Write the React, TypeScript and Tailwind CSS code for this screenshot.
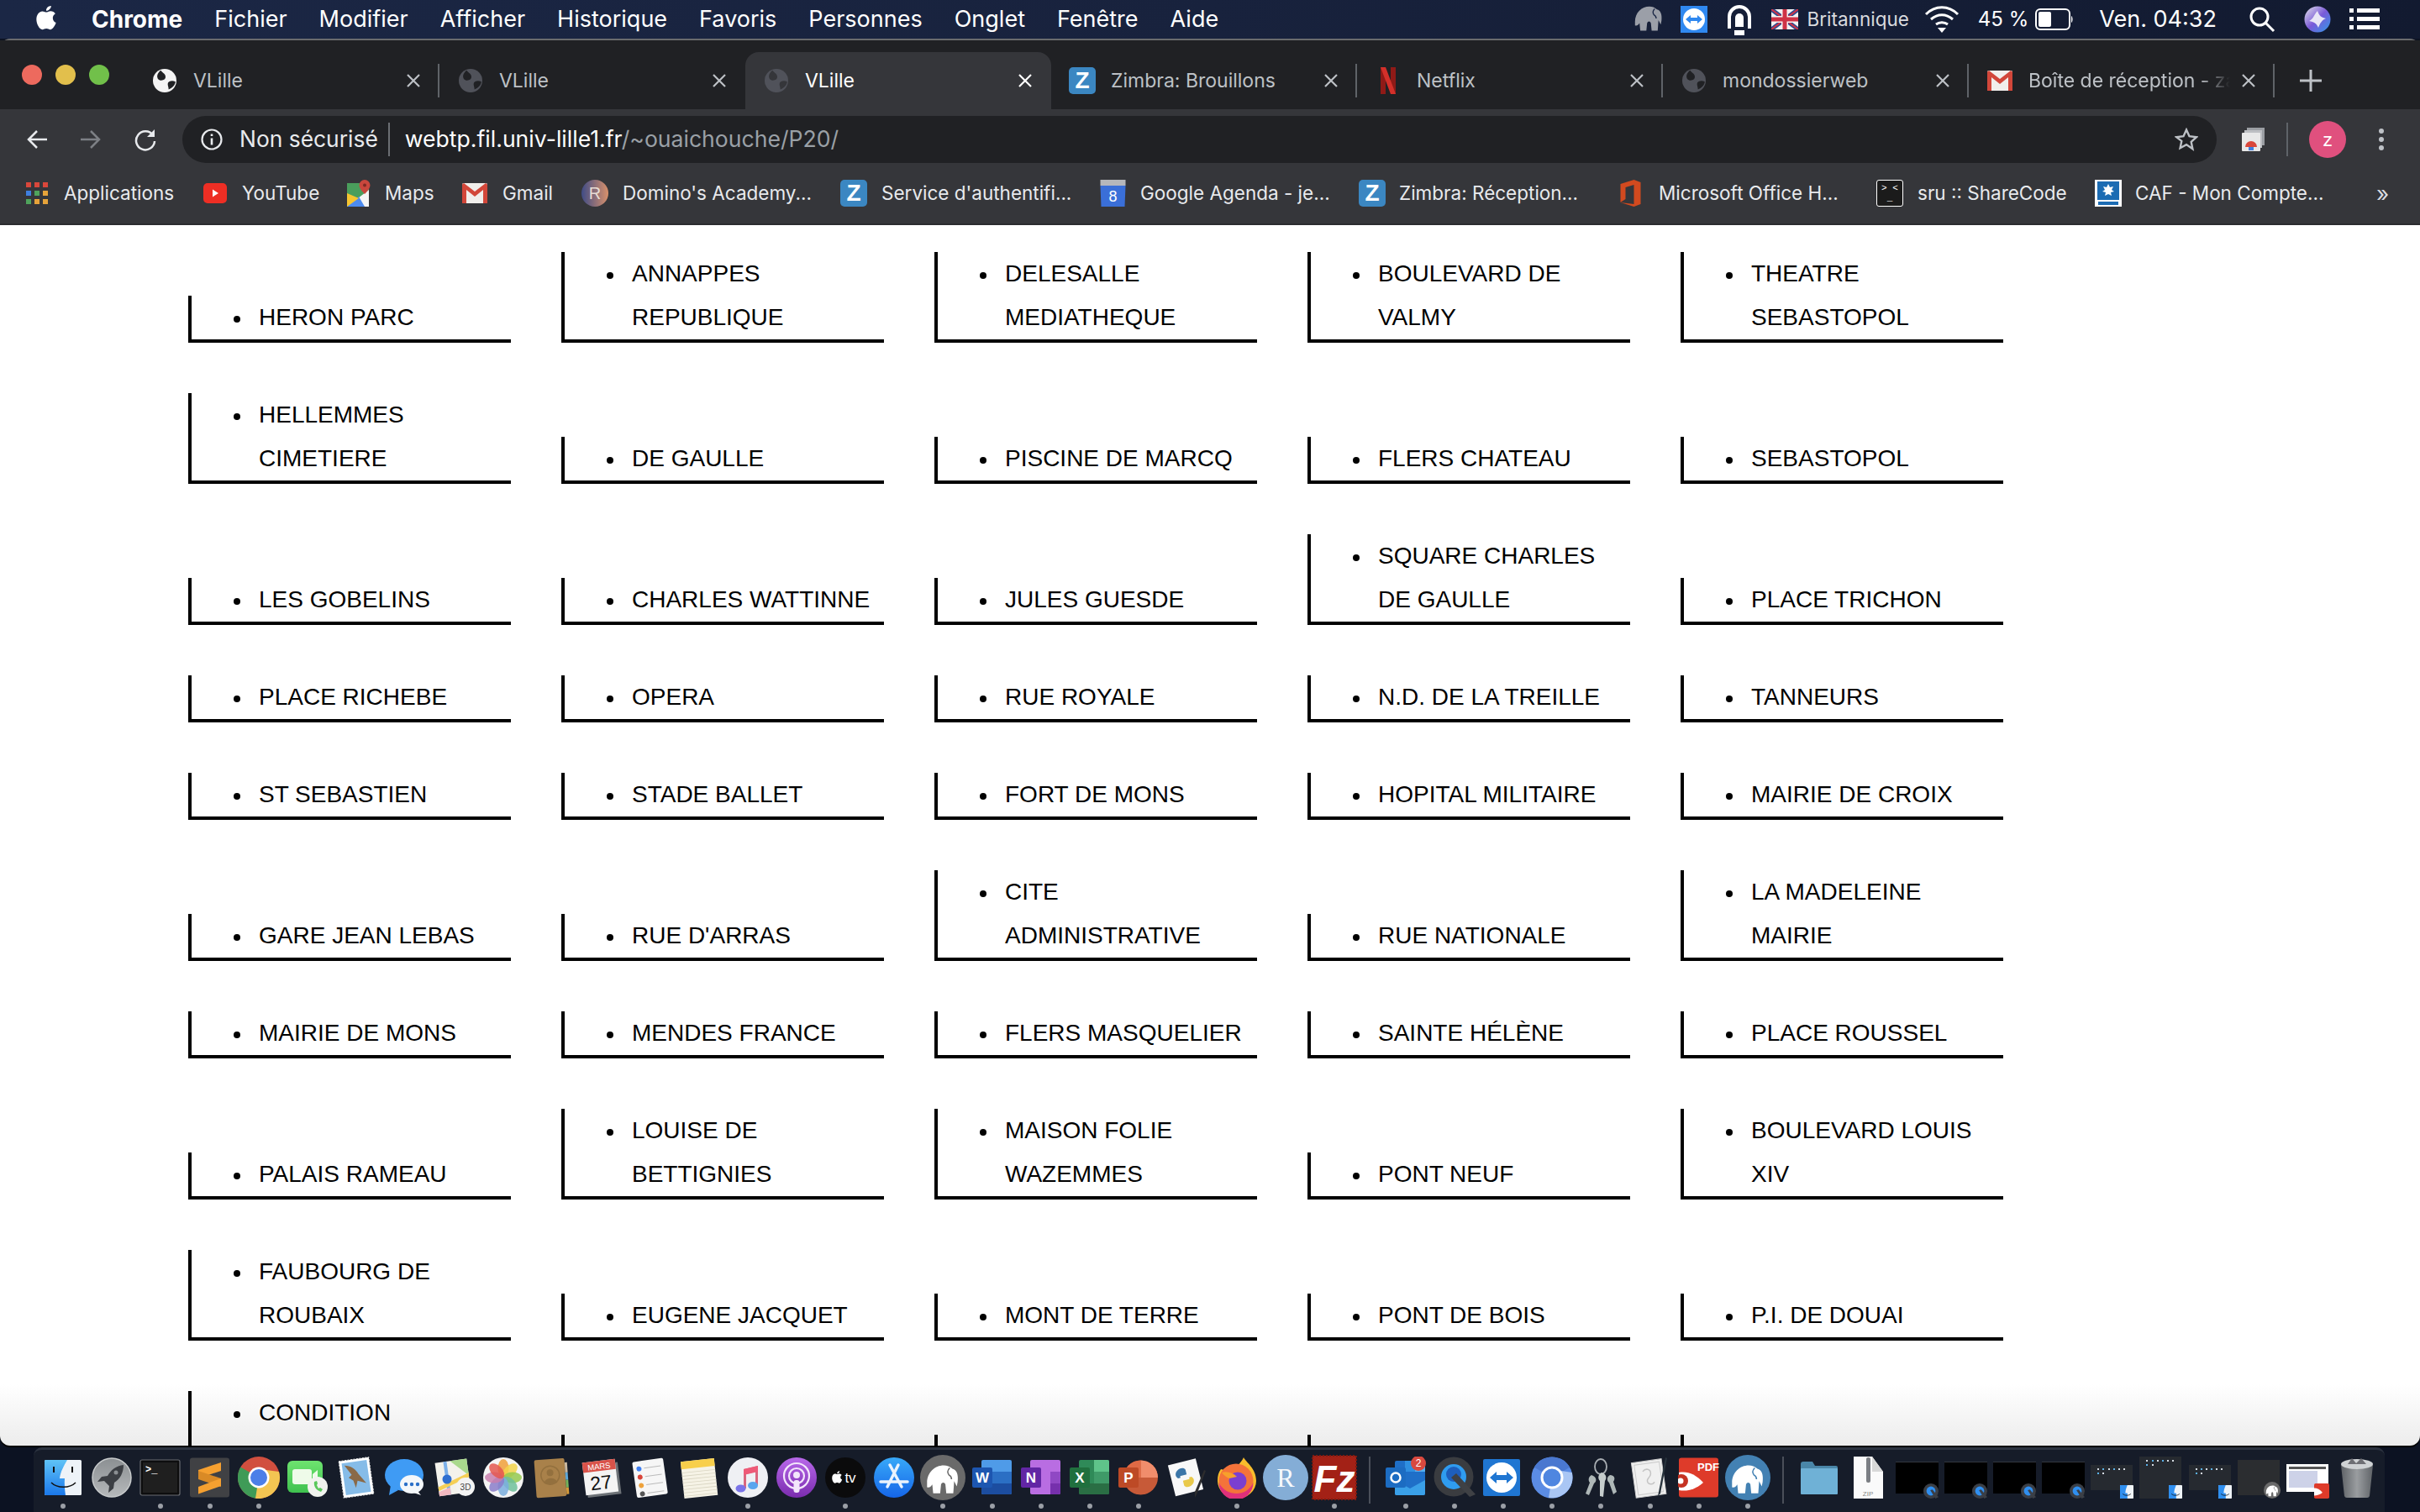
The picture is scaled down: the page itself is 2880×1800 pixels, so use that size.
import type { ReactNode } from "react";

const UI = "font-['Inter','Liberation_Sans',sans-serif]";

const stations: string[] = [
  "HERON PARC", "ANNAPPES REPUBLIQUE", "DELESALLE MEDIATHEQUE", "BOULEVARD DE VALMY", "THEATRE SEBASTOPOL",
  "HELLEMMES CIMETIERE", "DE GAULLE", "PISCINE DE MARCQ", "FLERS CHATEAU", "SEBASTOPOL",
  "LES GOBELINS", "CHARLES WATTINNE", "JULES GUESDE", "SQUARE CHARLES DE GAULLE", "PLACE TRICHON",
  "PLACE RICHEBE", "OPERA", "RUE ROYALE", "N.D. DE LA TREILLE", "TANNEURS",
  "ST SEBASTIEN", "STADE BALLET", "FORT DE MONS", "HOPITAL MILITAIRE", "MAIRIE DE CROIX",
  "GARE JEAN LEBAS", "RUE D'ARRAS", "CITE ADMINISTRATIVE", "RUE NATIONALE", "LA MADELEINE MAIRIE",
  "MAIRIE DE MONS", "MENDES FRANCE", "FLERS MASQUELIER", "SAINTE HÉLÈNE", "PLACE ROUSSEL",
  "PALAIS RAMEAU", "LOUISE DE BETTIGNIES", "MAISON FOLIE WAZEMMES", "PONT NEUF", "BOULEVARD LOUIS XIV",
  "FAUBOURG DE ROUBAIX", "EUGENE JACQUET", "MONT DE TERRE", "PONT DE BOIS", "P.I. DE DOUAI",
  "CONDITION",
];

function Globe({ fill, bg }: { fill: string; bg: string }) {
  return (
    <svg viewBox="0 0 24 24" className="h-[28px] w-[28px] shrink-0">
      <circle cx="12" cy="12" r="12" fill={fill} />
      <path d="M8 1.500C5 4 3.500 7 5 10c2 2.500 5 2 7 .5 1.500-1.500 1-4-.5-5.500C10.500 4 9 3 8 1.500z" fill={bg} />
      <path d="M23 13c-3-1.500-6-1-7.500 1-1 2.500.5 4 .5 7 3.500-1.500 6.500-4 7-8z" fill={bg} />
    </svg>
  );
}

function ZimbraIcon() {
  return (
    <div className="flex h-[32px] w-[32px] shrink-0 items-center justify-center rounded-[5px] bg-[#3b87c2] font-['Liberation_Sans',sans-serif] text-[28px] font-bold text-white">
      Z
    </div>
  );
}

function GmailIcon() {
  return (
    <svg viewBox="0 0 30 24" className="h-[26px] w-[30px] shrink-0">
      <rect width="30" height="24" rx="1.500" fill="#f1efec" />
      <path d="M0 1.500V24h5V8l10 8 10-8v16h5V1.500L28 0 15 10 2 0z" fill="#d2473a" />
    </svg>
  );
}

function NetflixIcon() {
  return (
    <svg viewBox="0 0 18 32" className="h-[32px] w-[18px] shrink-0">
      <rect x="0" width="6" height="32" fill="#8f1a17" />
      <rect x="12" width="6" height="32" fill="#8f1a17" />
      <path d="M0 0h6l12 32h-6z" fill="#d3302a" />
    </svg>
  );
}

const tabs: { title: string; icon: ReactNode; active?: boolean; fade?: boolean; sep?: boolean }[] = [
  { title: "VLille", icon: <Globe fill="#f4f4f4" bg="#202124" />, sep: true },
  { title: "VLille", icon: <Globe fill="#50525a" bg="#202124" />, sep: false },
  { title: "VLille", icon: <Globe fill="#50525a" bg="#35363a" />, active: true, sep: false },
  { title: "Zimbra: Brouillons", icon: <ZimbraIcon />, sep: true },
  { title: "Netflix", icon: <NetflixIcon />, sep: true },
  { title: "mondossierweb", icon: <Globe fill="#50525a" bg="#202124" />, sep: true },
  { title: "Boîte de réception - za", icon: <GmailIcon />, fade: true, sep: true },
];

const bookmarks: { label: string; width: string; ml: string; mr: string; icon: ReactNode }[] = [
  {
    label: "Applications",
    width: "w-[131px]",
    ml: "ml-[19px]",
    mr: "mr-[35px]",
    icon: (
      <svg viewBox="0 0 26 26" className="ml-[2px] h-[26px] w-[26px] shrink-0">
        {["#d9473b", "#d9473b", "#d9473b", "#3f7fe0", "#4fa35c", "#e6a33a", "#4fa35c", "#e6a33a", "#e6a33a"].map((c, i) => (
          <rect key={i} x={(i % 3) * 10} y={Math.floor(i / 3) * 10} width="6" height="6" fill={c} />
        ))}
      </svg>
    ),
  },
  {
    label: "YouTube",
    width: "w-[90px]",
    ml: "ml-[18px]",
    mr: "mr-[35px]",
    icon: (
      <svg viewBox="0 0 28 24" className="h-[24px] w-[28px] shrink-0">
        <rect width="28" height="24" rx="5" fill="#ee2e24" />
        <path d="M11 7.500l7 4.500-7 4.500z" fill="#fff" />
      </svg>
    ),
  },
  {
    label: "Maps",
    width: "w-[58px]",
    ml: "ml-[17px]",
    mr: "mr-[34px]",
    icon: (
      <svg viewBox="0 0 28 32" className="h-[32px] w-[28px] shrink-0">
        <path d="M0 4h26v28H0z" fill="#4a9e5c" />
        <path d="M0 32L26 12v20z" fill="#f5f5f5" />
        <path d="M0 32l14-12 7 12z" fill="#4c8bf0" />
        <path d="M0 16l14 6-14 10z" fill="#f6c530" />
        <path d="M21 0a6.500 6.500 0 0 1 6.500 6.500C27.500 11 21 17 21 17s-6.500-6-6.500-10.500A6.500 6.500 0 0 1 21 0z" fill="#c9473d" />
        <circle cx="21" cy="6.500" r="2" fill="#7c2a24" />
      </svg>
    ),
  },
  { label: "Gmail", width: "w-[62px]", ml: "ml-[18px]", mr: "mr-[32px]", icon: <GmailIcon /> },
  {
    label: "Domino's Academy...",
    width: "w-[225px]",
    ml: "ml-[17px]",
    mr: "mr-[34px]",
    icon: (
      <svg viewBox="0 0 32 32" className="h-[32px] w-[32px] shrink-0">
        <defs>
          <linearGradient id="dom" x1="0" x2="1">
            <stop offset="0" stopColor="#3f4c86" />
            <stop offset="1" stopColor="#d9916b" />
          </linearGradient>
        </defs>
        <circle cx="16" cy="16" r="16" fill="url(#dom)" />
        <text x="16" y="23" textAnchor="middle" fontSize="20" fill="#e8dcd4" fontFamily="Liberation Sans">R</text>
      </svg>
    ),
  },
  { label: "Service d'authentifi...", width: "w-[224px]", ml: "ml-[17px]", mr: "mr-[36px]", icon: <ZimbraIcon /> },
  {
    label: "Google Agenda - je...",
    width: "w-[225px]",
    ml: "ml-[17px]",
    mr: "mr-[35px]",
    icon: (
      <svg viewBox="0 0 30 32" className="h-[32px] w-[31px] shrink-0">
        <rect y="0" width="30" height="7" fill="#b5b7bb" />
        <path d="M0 7h30l-1 25H1z" fill="#3a6fd8" />
        <text x="15" y="26" textAnchor="middle" fontSize="18" fill="#fff" fontFamily="Liberation Sans">8</text>
      </svg>
    ),
  },
  { label: "Zimbra: Réception...", width: "w-[215px]", ml: "ml-[16px]", mr: "mr-[48px]", icon: <ZimbraIcon /> },
  {
    label: "Microsoft Office H...",
    width: "w-[214px]",
    ml: "ml-[21px]",
    mr: "mr-[45px]",
    icon: (
      <svg viewBox="0 0 24 32" className="h-[32px] w-[25px] shrink-0">
        <path d="M0 5L16 0l8 3v26l-8 3-16-5 16 2V6L6 9v14l-6 4z" fill="#d24a1f" />
      </svg>
    ),
  },
  {
    label: "sru :: ShareCode",
    width: "w-[178px]",
    ml: "ml-[17px]",
    mr: "mr-[33px]",
    icon: (
      <div className="flex h-[32px] w-[32px] shrink-0 flex-col items-center justify-center rounded-[3px] border border-white bg-[#1b1b1b] font-['Liberation_Mono',monospace] text-[11px] leading-[12px] text-white">
        <span>&gt;&nbsp;&lt;</span>
        <span>_</span>
      </div>
    ),
  },
  {
    label: "CAF - Mon Compte...",
    width: "w-[225px]",
    ml: "ml-[16px]",
    mr: "mr-[62px]",
    icon: (
      <svg viewBox="0 0 32 32" className="h-[32px] w-[32px] shrink-0">
        <rect width="32" height="32" fill="#fff" />
        <rect x="3" y="2" width="26" height="22" fill="#1c6cb3" />
        <path d="M16 5l2 4 4-1-2 4 3 2-4 1 1 4-4-2-4 2 1-4-4-1 3-2-2-4 4 1z" fill="#fff" />
        <rect x="4" y="26" width="24" height="4" fill="#1c6cb3" />
      </svg>
    ),
  },
];

function Elephant({ fill = "#fff", line }: { fill?: string; line: string }) {
  return (
    <>
      <path
        d="M7 31C7 19 16 11 26 11c4 0 7 1 10 4 5 1 7 7 6 15l-1 5-3-6-1 14h-8l-1-10c-1-3-4-3-5 0l-1 10h-8l-1-10c-2 3-4 4-6 3z"
        fill={fill}
      />
      <path d="M33 14c-3 3-3 5-1 8 2 1 3 3 3 5" stroke={line} strokeWidth="1.500" fill="none" />
    </>
  );
}

function ChromeLogo() {
  return (
    <>
      <circle cx="25" cy="25" r="25" fill="#d14f3f" />
      <path d="M25 25L3.300 12.500A25 25 0 0 0 21 49.700L33 32z" fill="#3f9b57" />
      <path d="M25 25L21 49.700A25 25 0 0 0 49 18L34 16z" fill="#f3c552" />
      <circle cx="25" cy="25" r="12.500" fill="#fff" />
      <circle cx="25" cy="25" r="10" fill="#4c7fe8" />
    </>
  );
}

function OfficeIcon({ front, letter, children }: { front: string; letter: string; children: ReactNode }) {
  return (
    <svg viewBox="0 0 50 50" className="h-[50px] w-[50px]">
      {children}
      <rect x="1" y="13" width="24" height="24" rx="2" fill={front} />
      <text x="13" y="31" textAnchor="middle" fontSize="17" fontWeight="700" fontFamily="Liberation Sans" fill="#fff">{letter}</text>
    </svg>
  );
}

function Thumb({ tall, badge, kind }: { tall?: boolean; badge: ReactNode; kind: "black" | "finder" | "site" | "mamp" }) {
  return (
    <div className="relative flex h-[50px] w-[51px] items-center">
      {kind === "black" && <div className="h-[38px] w-[51px] border-t border-[#33373f] bg-black" />}
      {kind === "finder" && (
        <div className={`w-[50px] bg-[#262a30] ${tall ? "h-[50px]" : "h-[30px]"} grid grid-cols-[repeat(6,1fr)] content-start gap-[3px] px-[8px] pt-[4px]`}>
          <div className="h-[2px] w-[2px] bg-[#d5dbe2]" />
          <div className="h-[2px] w-[2px] bg-[#5bb2e8]" />
          <div className="h-[2px] w-[2px] bg-[#d5dbe2]" />
          <div className="h-[2px] w-[2px] bg-[#5bb2e8]" />
          <div className="h-[2px] w-[2px] bg-[#d5dbe2]" />
          <div className="h-[2px] w-[2px] bg-[#d5dbe2]" />
          <div className="h-[2px] w-[2px] bg-[#5bb2e8]" />
          <div className="h-[2px] w-[2px] bg-[#d5dbe2]" />
        </div>
      )}
      {kind === "mamp" && <div className="h-[42px] w-[50px] bg-[#2b2d30]" />}
      {kind === "site" && (
        <div className="h-[33px] w-[50px] bg-white p-[3px]">
          <div className="h-[3px] bg-[#555]" />
          <div className="mt-[2px] h-[20px] w-[34px] bg-[#cdd2e8]" />
        </div>
      )}
      <div className="absolute right-0 bottom-0 flex">{badge}</div>
    </div>
  );
}

const FinderMini = () => (
  <svg viewBox="0 0 20 20" className="h-[16px] w-[16px]">
    <rect width="20" height="20" rx="1" fill="#eef3f8" />
    <path d="M0 1a1 1 0 0 1 1-1h10c-2 5-3 8-3 12h3v8H1a1 1 0 0 1-1-1z" fill="#2f8ff0" />
    <path d="M4 13c3 3 9 3 12 0" stroke="#111" fill="none" />
  </svg>
);

const QuickMini = () => (
  <svg viewBox="0 0 20 20" className="h-[18px] w-[18px]">
    <circle cx="10" cy="10" r="10" fill="#3b3f46" />
    <circle cx="10" cy="10" r="6" fill="#2f8ff0" />
    <path d="M9 9l3-1 8 10-4 2z" fill="#3b3f46" />
  </svg>
);

type DockEntry = { node: ReactNode; dot?: boolean } | "sep";

const Svg50 = ({ children }: { children: ReactNode }) => (
  <svg viewBox="0 0 50 50" className="h-[50px] w-[50px]">
    {children}
  </svg>
);

const Tall = ({ children }: { children: ReactNode }) => (
  <svg viewBox="0 0 54 54" className="h-[54px] w-[54px]">
    {children}
  </svg>
);

const dock: DockEntry[] = [
  {
    dot: true,
    node: (
      <Svg50>
        <defs>
          <linearGradient id="fb" x1="0" y1="0" x2="0" y2="1">
            <stop offset="0" stopColor="#5fc3f7" />
            <stop offset="1" stopColor="#1b78ea" />
          </linearGradient>
        </defs>
        <rect x="3" y="4" width="44" height="42" rx="1.500" fill="#eef3f8" />
        <path d="M3 5.500A1.500 1.500 0 0 1 4.500 4H30c-4 7-8 14-9 22h6c-.5 6 0 13 1 20H4.500A1.500 1.500 0 0 1 3 44.500z" fill="url(#fb)" />
        <rect x="13" y="12" width="2" height="7" fill="#111" />
        <rect x="35" y="12" width="2" height="7" fill="#111" />
        <path d="M11 31c7 7 22 7 29 0" stroke="#111" strokeWidth="1.500" fill="none" />
      </Svg50>
    ),
  },
  {
    node: (
      <Svg50>
        <defs>
          <linearGradient id="lp" x1="0" y1="0" x2="0" y2="1">
            <stop offset="0" stopColor="#8b8f92" />
            <stop offset="1" stopColor="#b6b9bb" />
          </linearGradient>
        </defs>
        <circle cx="25" cy="25" r="23" fill="url(#lp)" stroke="#c8cbcc" strokeWidth="1.500" />
        <path d="M39 10c-9 1-15 6-19 13l-7 1-5 6 8-1 6 6-1 8 6-5 1-7c7-4 11-12 11-21z" fill="#3c3f44" />
        <circle cx="30" cy="19" r="2.500" fill="#8b8f92" />
      </Svg50>
    ),
  },
  {
    dot: true,
    node: (
      <Svg50>
        <rect x="1" y="4" width="47" height="42" rx="2" fill="#0d0d0e" stroke="#6a6d72" strokeWidth="1.200" />
        <rect x="4" y="7" width="41" height="36" fill="#1f1f1f" />
        <text x="7" y="19" fontSize="12" fontWeight="700" fill="#fff" fontFamily="Liberation Mono">&gt;_</text>
      </Svg50>
    ),
  },
  {
    dot: true,
    node: (
      <Svg50>
        <rect x="1" y="1.500" width="47" height="47" rx="3" fill="#404144" />
        <polygon points="11,16 38,7 38,17 11,26" fill="#f5a030" />
        <polygon points="11,17 38,26 38,36 11,27" fill="#d98a26" />
        <polygon points="11,36 38,26 38,35 11,44.500" fill="#f5a030" />
      </Svg50>
    ),
  },
  { dot: true, node: <Svg50><ChromeLogo /></Svg50> },
  {
    node: (
      <Svg50>
        <defs>
          <linearGradient id="ft" x1="0" y1="0" x2="0" y2="1">
            <stop offset="0" stopColor="#6ee36f" />
            <stop offset="1" stopColor="#3fc14f" />
          </linearGradient>
        </defs>
        <rect x="1" y="5" width="42" height="38" rx="6" fill="url(#ft)" />
        <rect x="7" y="15" width="23" height="18" rx="3" fill="#eefbe9" />
        <path d="M31 21l6-5v14l-6-3z" fill="#eefbe9" />
        <circle cx="37" cy="36" r="12" fill="#f1f3ef" />
        <path d="M33 30c-1 5 2 10 8 12l2-3-3-2-2 1-2-4 1-2-1-3z" fill="#5ac85c" />
      </Svg50>
    ),
  },
  {
    node: (
      <Svg50>
        <g transform="rotate(-8 25 25)">
          <rect x="7" y="3" width="36" height="44" fill="#fff" stroke="#e6e6e6" strokeDasharray="2 1.500" />
          <rect x="10" y="6" width="30" height="38" fill="#86bce8" />
          <path d="M13 9c7 1 13 6 15 12l8 12-10-4-3 8-2-9-5-4 4-3z" fill="#8a6a48" />
        </g>
      </Svg50>
    ),
  },
  {
    node: (
      <Svg50>
        <ellipse cx="24" cy="22" rx="23" ry="19" fill="#3f9bf4" />
        <path d="M8 34l-2 12 11-6z" fill="#3f9bf4" />
        <ellipse cx="33" cy="33" rx="14" ry="11" fill="#f4f7fa" />
        <path d="M40 41l4 5-9-3z" fill="#f4f7fa" />
        <circle cx="26" cy="33" r="2.200" fill="#2a6fc8" />
        <circle cx="33" cy="33" r="2.200" fill="#2a6fc8" />
        <circle cx="40" cy="33" r="2.200" fill="#2a6fc8" />
      </Svg50>
    ),
  },
  {
    node: (
      <Svg50>
        <g transform="rotate(-8 22 24)">
          <rect x="4" y="5" width="38" height="40" fill="#f3f2ec" />
          <path d="M22 5h20v20z" fill="#a9d98d" />
          <path d="M14 5h4v40h-4z" fill="#7cb0ea" />
          <path d="M4 34L42 22v5L4 39z" fill="#f5cf56" />
          <path d="M4 40l14-4v9H4z" fill="#f3b9c0" />
        </g>
        <circle cx="16" cy="27" r="5.500" fill="#2f6fd0" />
        <circle cx="38" cy="36" r="11" fill="#f3f3f3" />
        <text x="38" y="40" textAnchor="middle" fontSize="10" fill="#444" fontFamily="Liberation Sans">3D</text>
      </Svg50>
    ),
  },
  {
    node: (
      <Svg50>
        <circle cx="25" cy="25" r="24" fill="#f4f4f4" />
        {["#f0a03a", "#f3d34a", "#94c94f", "#6fbf9a", "#7aaede", "#8a7cc9", "#c87fae", "#e4574f"].map((c, i) => (
          <ellipse key={i} cx="25" cy="14" rx="6.500" ry="11" fill={c} opacity="0.85" transform={`rotate(${i * 45} 25 25)`} />
        ))}
      </Svg50>
    ),
  },
  {
    node: (
      <Svg50>
        <g transform="rotate(-4 25 25)">
          <rect x="5" y="3" width="36" height="45" rx="2" fill="#a9814a" />
          <rect x="41" y="8" width="3" height="12" fill="#c9b8a0" />
          <rect x="41" y="20" width="3" height="9" fill="#5ea8d8" />
          <rect x="41" y="29" width="3" height="9" fill="#75b35c" />
          <rect x="41" y="38" width="3" height="8" fill="#d59a3a" />
          <circle cx="23" cy="22" r="11" fill="none" stroke="#93703e" strokeWidth="1.500" />
          <circle cx="23" cy="19" r="4" fill="#93703e" />
          <path d="M15 31c2-7 14-7 16 0-4 3-12 3-16 0z" fill="#93703e" />
        </g>
      </Svg50>
    ),
  },
  {
    node: (
      <Svg50>
        <g transform="rotate(-7 25 25)">
          <rect x="7" y="9" width="40" height="38" fill="#6d7277" />
          <rect x="5" y="5" width="39" height="39" fill="#f4f4f4" />
          <rect x="5" y="5" width="39" height="12" fill="#d9534a" />
          <text x="24.500" y="15" textAnchor="middle" fontSize="9.500" fill="#fff" fontFamily="Liberation Sans">MARS</text>
          <text x="24.500" y="39" textAnchor="middle" fontSize="23" fill="#111" fontFamily="Liberation Sans">27</text>
        </g>
      </Svg50>
    ),
  },
  {
    node: (
      <Svg50>
        <g transform="rotate(-8 25 25)">
          <rect x="7" y="4" width="37" height="43" rx="2" fill="#f6f6f6" />
          {["#3f7ff0", "#d9453a", "#eea23b", "#555"].map((c, i) => (
            <g key={i}>
              <circle cx="14" cy={13 + i * 10} r="3" fill={c} />
              <rect x="20" y={12.500 + i * 10} width="20" height="1" fill="#bbb" />
            </g>
          ))}
        </g>
      </Svg50>
    ),
  },
  {
    node: (
      <Svg50>
        <g transform="rotate(-6 25 25)">
          <rect x="5" y="4" width="40" height="44" fill="#f6f3e6" />
          <rect x="5" y="4" width="40" height="9" fill="#f8cf4b" />
          {[17, 21, 25, 29, 33, 37, 41, 45].map((y) => (
            <rect key={y} x="5" y={y} width="40" height="0.800" fill="#d9d5c2" />
          ))}
        </g>
      </Svg50>
    ),
  },
  {
    dot: true,
    node: (
      <Svg50>
        <circle cx="25" cy="25" r="24" fill="#eff0f4" />
        <path d="M20 15l17-4v23h-3V18l-11 3v17h-3z" fill="#d9667e" />
        <path d="M20 15l17-4v7l-17 4z" fill="#ee5a78" />
        <ellipse cx="16.500" cy="38" rx="6" ry="4.500" fill="#7a74e8" />
        <ellipse cx="31" cy="34.500" rx="6" ry="4.500" fill="#5aa5ee" />
      </Svg50>
    ),
  },
  {
    node: (
      <Svg50>
        <defs>
          <linearGradient id="pod" x1="0" y1="0" x2="0" y2="1">
            <stop offset="0" stopColor="#b868ea" />
            <stop offset="1" stopColor="#7a2cae" />
          </linearGradient>
        </defs>
        <circle cx="25" cy="25" r="24" fill="url(#pod)" />
        <circle cx="25" cy="23" r="15" fill="none" stroke="#f3e6fb" strokeWidth="2.200" />
        <circle cx="25" cy="23" r="9" fill="none" stroke="#f3e6fb" strokeWidth="2.200" />
        <circle cx="25" cy="22" r="4" fill="#f3e6fb" />
        <rect x="21.500" y="28" width="7" height="15" rx="3" fill="#f3e6fb" />
      </Svg50>
    ),
  },
  {
    dot: true,
    node: (
      <Svg50>
        <circle cx="25" cy="25" r="24" fill="#0b0b0c" />
        <g transform="translate(8 16) scale(0.6)" fill="#fff">
          <path d="M17 2c.2 2-2 5-5 5-.3-2.500 2-5 5-5zM12 8.500c1.200 0 2.500-1.200 4.500-1.200 2 0 3.800 1 4.800 2.700-3.800 2.200-3.200 7.700.7 9.200-1 2.800-3.400 7-5.800 7-1.500 0-2.200-1-4-1s-2.700 1-4.100 1C5 26.200 2 20.500 2 15.800 2 10.500 5.200 7.500 8 7.500c1.700 0 3 1 4 1z" />
        </g>
        <text x="31" y="31" textAnchor="middle" fontSize="17" fill="#fff" fontFamily="Liberation Sans">tv</text>
      </Svg50>
    ),
  },
  {
    node: (
      <Svg50>
        <defs>
          <linearGradient id="as" x1="0" y1="0" x2="0" y2="1">
            <stop offset="0" stopColor="#38a9f8" />
            <stop offset="1" stopColor="#1565e8" />
          </linearGradient>
        </defs>
        <circle cx="25" cy="25" r="24" fill="url(#as)" />
        <path d="M30 10L17 36M20 10l14 26M9 30h32" stroke="#eaf3fd" strokeWidth="3.500" strokeLinecap="round" />
      </Svg50>
    ),
  },
  {
    dot: true,
    node: (
      <Tall>
        <circle cx="27" cy="27" r="27" fill="#6a6a6a" />
        <g transform="translate(1 1) scale(1.040)">
          <Elephant line="#6a6a6a" />
        </g>
      </Tall>
    ),
  },
  {
    dot: true,
    node: (
      <OfficeIcon front="#1d56b0" letter="W">
        <rect x="12" y="4" width="36" height="41" rx="2" fill="#4f9be8" />
        <rect x="12" y="18" width="36" height="14" fill="#2b6fc4" />
        <path d="M12 32h36v11a2 2 0 0 1-2 2H14a2 2 0 0 1-2-2z" fill="#1c4da0" />
      </OfficeIcon>
    ),
  },
  {
    dot: true,
    node: (
      <OfficeIcon front="#6226a4" letter="N">
        <rect x="12" y="4" width="36" height="41" rx="2" fill="#b96de2" />
        <rect x="36" y="18" width="12" height="14" fill="#9048c4" />
        <path d="M36 32h12v11a2 2 0 0 1-2 2H36z" fill="#7630ac" />
      </OfficeIcon>
    ),
  },
  {
    dot: true,
    node: (
      <OfficeIcon front="#20703e" letter="X">
        <rect x="12" y="4" width="36" height="41" rx="2" fill="#2f8a58" />
        <path d="M30 4h16a2 2 0 0 1 2 2v12H30z" fill="#5fc48a" />
        <rect x="30" y="18" width="18" height="14" fill="#3f9a68" />
        <path d="M12 32h36v11a2 2 0 0 1-2 2H14a2 2 0 0 1-2-2z" fill="#2a6e44" />
      </OfficeIcon>
    ),
  },
  {
    dot: true,
    node: (
      <Svg50>
        <circle cx="27.500" cy="25" r="20.500" fill="#c75a38" />
        <path d="M27.500 25V4.500A20.500 20.500 0 0 1 48 25z" fill="#f08d6c" />
        <path d="M27.500 25V4.500A20.500 20.500 0 0 0 7 25z" fill="#e06a45" />
        <rect x="1" y="13" width="24" height="24" rx="2" fill="#bd4a26" />
        <text x="13" y="31" textAnchor="middle" fontSize="17" fontWeight="700" fill="#fff" fontFamily="Liberation Sans">P</text>
      </Svg50>
    ),
  },
  {
    node: (
      <Svg50>
        <g transform="rotate(-14 22 25)">
          <rect x="6" y="6" width="34" height="38" fill="#f8f8f8" />
          <path d="M15 15c4-3 9-2 10 1v6h-8v2h-3c-3-3-2-7 1-9z" fill="#3c76a8" />
          <path d="M29 35c-4 3-9 2-10-1v-6h8v-2h3c3 3 2 7-1 9z" fill="#e9c94a" />
        </g>
        <path d="M45 16l2 1-10 26-3 6 0-7z" fill="#2c2c2e" />
      </Svg50>
    ),
  },
  {
    dot: true,
    node: (
      <Svg50>
        <path d="M33 1c3 6 15 13 15 28a23 21 0 0 1-46 0c0-6 1-10 4-14l8 2c3-2 8-2 10-1 0-5 6-8 9-15z" fill="#f9bd2c" />
        <circle cx="24" cy="29" r="20.500" fill="#f4733a" />
        <path d="M3.500 31a20.500 20.500 0 0 0 41 0c-4 9-12 13-20 13S8 40 3.500 31z" fill="#e0307a" />
        <circle cx="26" cy="29" r="10.500" fill="#7b3fd0" />
        <path d="M7 19c6-2 13 0 18 5l-9 2c-3-1-7-4-9-7z" fill="#f7a02b" />
      </Svg50>
    ),
  },
  {
    node: (
      <Tall>
        <circle cx="27" cy="27" r="27" fill="#84add6" />
        <text x="27" y="38" textAnchor="middle" fontSize="32" fill="#f6f9fc" fontFamily="Liberation Serif">R</text>
      </Tall>
    ),
  },
  {
    dot: true,
    node: (
      <Tall>
        <rect x="1" y="1" width="52" height="52" fill="#a32116" stroke="#7f1a10" strokeDasharray="2 2" strokeWidth="2" />
        <text x="27" y="44" textAnchor="middle" fontSize="44" fontWeight="700" fontStyle="italic" fill="#fff" fontFamily="Liberation Sans">Fz</text>
      </Tall>
    ),
  },
  "sep",
  {
    dot: true,
    node: (
      <Svg50>
        <rect x="12" y="5" width="36" height="41" rx="2" fill="#1f6fc8" />
        <rect x="24" y="5" width="12" height="13" fill="#2f8fe0" />
        <rect x="36" y="5" width="12" height="13" fill="#54b0f0" />
        <path d="M12 28l18 10 18-10v16a2 2 0 0 1-2 2H14a2 2 0 0 1-2-2z" fill="#3aa0e8" />
        <rect x="1" y="13" width="24" height="24" rx="2" fill="#1c6cc2" />
        <circle cx="13" cy="25" r="5.500" fill="none" stroke="#fff" strokeWidth="2.500" />
        <circle cx="40" cy="8" r="9" fill="#d9493f" />
        <text x="40" y="12" textAnchor="middle" fontSize="12" fill="#fff" fontFamily="Liberation Sans">2</text>
      </Svg50>
    ),
  },
  {
    dot: true,
    node: (
      <Svg50>
        <circle cx="24" cy="24" r="23.500" fill="#3a3c40" />
        <circle cx="24" cy="24" r="15" fill="#2f9cf0" />
        <circle cx="24" cy="21" r="9" fill="#1e5ebc" />
        <path d="M21 25l6-5 23 25-7 3z" fill="#3f4145" />
      </Svg50>
    ),
  },
  {
    dot: true,
    node: (
      <Svg50>
        <rect x="1" y="3" width="44" height="44" rx="2" fill="#1f76d2" />
        <circle cx="23" cy="25" r="18" fill="#fff" />
        <path d="M9 25l8-7v4h12v-4l8 7-8 7v-4H17v4z" fill="#1f76d2" />
      </Svg50>
    ),
  },
  {
    dot: true,
    node: (
      <Svg50>
        <circle cx="25" cy="25" r="24.500" fill="#5b8ce4" />
        <path d="M25 25L3.800 12.800A24.500 24.500 0 0 1 46.200 12.800z" fill="#4a78d0" />
        <path d="M25 25l-4 24A24.500 24.500 0 0 0 48.800 19L36 17z" fill="#a9c6f4" />
        <circle cx="25" cy="25" r="12" fill="#4f86e0" stroke="#fff" strokeWidth="3" />
      </Svg50>
    ),
  },
  {
    dot: true,
    node: (
      <Svg50>
        <ellipse cx="25" cy="12" rx="7" ry="9" fill="none" stroke="#a8adb2" strokeWidth="1.800" />
        <path d="M14 22c-4 2-4 7-2 9L7 44l4 2 6-14c4-3 3-8-3-10z" fill="#aeb7b7" />
        <path d="M26 19c-4 2-5 7-2 10v18l4 1 2-19c3-4 1-9-4-10z" fill="#c5cccc" />
        <path d="M36 22c-4 2-4 7-1 9l5 14 4-3-4-12c3-4 1-8-4-8z" fill="#aeb7b7" />
      </Svg50>
    ),
  },
  {
    dot: true,
    node: (
      <Svg50>
        <g transform="rotate(-8 23 25)">
          <rect x="5" y="5" width="36" height="42" fill="#f0f0f0" stroke="#ccc" />
          <rect x="8" y="8" width="30" height="36" fill="none" stroke="#ccc" />
          <path d="M17 17c4-4 10-2 9 4-1 5-6 4-5 9 1 4 7 4 8 1" stroke="#c4c4c4" strokeWidth="1.500" fill="none" />
        </g>
        <path d="M43 1l2 1-8 42-3 3z" fill="#27323c" />
      </Svg50>
    ),
  },
  {
    dot: true,
    node: (
      <Svg50>
        <rect x="1" y="1.500" width="47" height="47" rx="3" fill="#de3b2a" />
        <text x="36" y="17" textAnchor="middle" fontSize="13" fontWeight="700" fill="#fff" fontFamily="Liberation Sans">PDF</text>
        <path d="M1 19c10-2 20 2 29 12-9 8-19 11-29 9z" fill="#fff" />
        <circle cx="4" cy="29" r="8" fill="#c53222" />
        <circle cx="3" cy="29" r="3.500" fill="#fff" />
      </Svg50>
    ),
  },
  {
    dot: true,
    node: (
      <Tall>
        <circle cx="27" cy="27" r="27" fill="#4381b3" />
        <g transform="translate(1 1) scale(1.040)">
          <Elephant line="#4381b3" />
        </g>
      </Tall>
    ),
  },
  "sep",
  {
    node: (
      <Svg50>
        <path d="M3 9a3 3 0 0 1 3-3h11l3 5h25a2 2 0 0 1 2 2v30a1 1 0 0 1-1 1H4a1 1 0 0 1-1-1z" fill="#4a86a8" />
        <path d="M3 15a1 1 0 0 1 1-1h42a1 1 0 0 1 1 1v29a1 1 0 0 1-1 1H4a1 1 0 0 1-1-1z" fill="#6fb1d6" />
      </Svg50>
    ),
  },
  {
    node: (
      <Svg50>
        <path d="M8 0h22l13 18v32H8z" fill="#fafafa" />
        <path d="M30 0l13 18H30z" fill="#d8d8d8" />
        <rect x="23" y="1" width="5" height="30" rx="2" fill="#7c7f84" />
        <text x="25" y="47" textAnchor="middle" fontSize="8" fill="#888" fontFamily="Liberation Sans">ZIP</text>
      </Svg50>
    ),
  },
  { node: <Thumb kind="black" badge={<QuickMini />} /> },
  { node: <Thumb kind="black" badge={<QuickMini />} /> },
  { node: <Thumb kind="black" badge={<QuickMini />} /> },
  { node: <Thumb kind="black" badge={<QuickMini />} /> },
  { node: <Thumb kind="finder" badge={<FinderMini />} /> },
  { node: <Thumb kind="finder" tall badge={<FinderMini />} /> },
  { node: <Thumb kind="finder" badge={<FinderMini />} /> },
  {
    node: (
      <Thumb
        kind="mamp"
        badge={
          <svg viewBox="0 0 50 50" className="h-[20px] w-[20px]">
            <circle cx="25" cy="25" r="25" fill="#6a6a6a" />
            <Elephant line="#6a6a6a" />
          </svg>
        }
      />
    ),
  },
  {
    node: (
      <Thumb
        kind="site"
        badge={
          <svg viewBox="0 0 20 20" className="h-[18px] w-[18px]">
            <rect width="20" height="20" rx="2" fill="#de3b2a" />
            <path d="M0 6c4 0 8 2 11 6-3 3-7 4-11 4z" fill="#fff" />
          </svg>
        }
      />
    ),
  },
  {
    node: (
      <Svg50>
        <defs>
          <linearGradient id="trash" x1="0" x2="1">
            <stop offset="0" stopColor="#5f6367" />
            <stop offset="0.500" stopColor="#9a9da0" />
            <stop offset="1" stopColor="#5f6367" />
          </linearGradient>
        </defs>
        <path d="M6 10h38l-4 37a3 3 0 0 1-3 2H13a3 3 0 0 1-3-2z" fill="url(#trash)" />
        <ellipse cx="25" cy="9" rx="19" ry="6" fill="#cfd2d4" />
        <path d="M14 9l5-7 5 6 6-6 6 7z" fill="#6e6f74" />
      </Svg50>
    ),
  },
];

function MenuBar() {
  const items = ["Fichier", "Modifier", "Afficher", "Historique", "Favoris", "Personnes", "Onglet", "Fenêtre", "Aide"];
  return (
    <div className={`flex h-[46px] shrink-0 items-center bg-linear-to-r from-[#1b2745] via-[#18223d] to-[#121a30] pl-[41px] text-[27px] text-white ${UI}`}>
      <svg viewBox="0 0 24 28" className="mb-[4px] h-[38px] w-[28px]" fill="#fff">
        <path d="M17 2c.2 2-2 5-5 5-.3-2.500 2-5 5-5zM12 8.500c1.200 0 2.500-1.200 4.500-1.200 2 0 3.800 1 4.800 2.700-3.800 2.200-3.200 7.700.7 9.200-1 2.800-3.400 7-5.800 7-1.500 0-2.200-1-4-1s-2.700 1-4.100 1C5 26.200 2 20.500 2 15.800 2 10.500 5.200 7.500 8 7.500c1.700 0 3 1 4 1z" />
      </svg>
      <span className="ml-[40px] text-[28px] font-bold">Chrome</span>
      <div className="ml-[38px] flex items-center gap-[38px]">
        {items.map((m) => (
          <span key={m}>{m}</span>
        ))}
      </div>
      <div className="ml-auto flex items-center pr-[48px]">
        <svg viewBox="5 9 40 38" className="h-[36px] w-[36px]">
          <Elephant fill="#9b9fa8" line="#1b2745" />
        </svg>
        <div className="ml-[20px] flex h-[32px] w-[32px] items-center justify-center bg-[#2f88f0]">
          <svg viewBox="0 0 32 32" className="h-[32px] w-[32px]">
            <circle cx="16" cy="16" r="13" fill="#fff" />
            <path d="M6 16l6-5v3h8v-3l6 5-6 5v-3h-8v3z" fill="#2f88f0" />
          </svg>
        </div>
        <svg viewBox="0 0 32 38" className="ml-[22px] h-[38px] w-[32px]" fill="none">
          <path d="M4 30V16a12 12 0 0 1 24 0v14" stroke="#fff" strokeWidth="4" />
          <path d="M11 28V17a5 5 0 0 1 10 0v11z" fill="#fff" />
          <rect x="10" y="32" width="12" height="6" fill="#fff" />
        </svg>
        <svg viewBox="0 0 32 24" className="ml-[22px] h-[24px] w-[32px]">
          <rect width="32" height="24" fill="#f2f2f2" />
          <path d="M0 0l32 24M32 0L0 24" stroke="#2d4a8f" strokeWidth="5" />
          <path d="M0 0l32 24M32 0L0 24" stroke="#cf3346" strokeWidth="2" />
          <path d="M16 0v24M0 12h32" stroke="#f2f2f2" strokeWidth="8" />
          <path d="M16 0v24M0 12h32" stroke="#cf3346" strokeWidth="5" />
        </svg>
        <span className="ml-[11px] text-[22.500px] text-[#d9dade]">Britannique</span>
        <svg viewBox="0 0 42 34" className="ml-[18px] h-[34px] w-[42px]" fill="none" stroke="#fff" strokeWidth="3">
          <path d="M2 11c11-11 27-11 38 0M8 17c8-7 18-7 26 0M14 23c4-3 10-3 14 0" />
          <path d="M16 27h10l-5 6z" fill="#fff" stroke="none" />
        </svg>
        <span className="ml-[22px] text-[24px]">45 %</span>
        <svg viewBox="0 0 46 26" className="ml-[8px] h-[26px] w-[46px]" fill="none">
          <rect x="1" y="1" width="40" height="24" rx="5" stroke="#fff" strokeWidth="2" />
          <rect x="4" y="4" width="15" height="18" rx="2" fill="#fff" />
          <path d="M43 9c2 1 2 7 0 8z" fill="#fff" />
        </svg>
        <span className="ml-[30px]">Ven. 04:32</span>
        <svg viewBox="0 0 32 32" className="ml-[38px] h-[32px] w-[32px]" fill="none" stroke="#fff" strokeWidth="3">
          <circle cx="13" cy="13" r="10" />
          <path d="M20 20l10 10" />
        </svg>
        <svg viewBox="0 0 32 32" className="ml-[34px] h-[32px] w-[32px]">
          <defs>
            <linearGradient id="siri" x1="0" y1="0" x2="1" y2="1">
              <stop offset="0" stopColor="#e6e6ea" />
              <stop offset="0.500" stopColor="#7a5ad8" />
              <stop offset="1" stopColor="#2f9ae8" />
            </linearGradient>
          </defs>
          <circle cx="16" cy="16" r="15.500" fill="url(#siri)" />
          <path d="M6 18c5-2 6-8 10-12 2 6 5 8 10 9-5 2-7 6-9 11-2-5-5-7-11-8z" fill="#e8e6f6" />
        </svg>
        <svg viewBox="0 0 36 30" className="ml-[22px] h-[30px] w-[36px]" fill="#fff">
          <rect x="0" y="2" width="5" height="5" />
          <rect x="9" y="2" width="27" height="5" />
          <rect x="0" y="12" width="5" height="5" />
          <rect x="9" y="12" width="27" height="5" />
          <rect x="0" y="22" width="5" height="5" />
          <rect x="9" y="22" width="27" height="5" />
        </svg>
      </div>
    </div>
  );
}

function TabStrip() {
  return (
    <div className={`flex h-[82px] shrink-0 items-end bg-[#202124] text-[23px] ${UI}`}>
      <div className="flex h-[82px] w-[159px] shrink-0 items-center gap-[16px] pl-[26px]">
        <span className="h-[24px] w-[24px] rounded-full bg-[#ed6a5e]" />
        <span className="h-[24px] w-[24px] rounded-full bg-[#e2bf4c]" />
        <span className="h-[24px] w-[24px] rounded-full bg-[#71c04a]" />
      </div>
      {tabs.map((t, i) => (
        <div
          key={i}
          className={`relative flex h-[68px] w-[364px] shrink-0 items-center pl-[21px] ${t.active ? "rounded-t-[16px] bg-[#35363a] text-white" : "text-[#bdc1c6]"}`}
        >
          <div className="flex w-[32px] shrink-0 justify-center">{t.icon}</div>
          <span className={`ml-[18px] w-[240px] overflow-hidden whitespace-nowrap ${t.fade ? "[mask-image:linear-gradient(to_right,black_85%,transparent)]" : ""}`}>{t.title}</span>
          <svg viewBox="0 0 18 18" className="ml-[13px] h-[18px] w-[18px]" stroke={t.active ? "#fff" : "#bdc1c6"} strokeWidth="2.200">
            <path d="M2 2l14 14M16 2L2 16" />
          </svg>
          {t.sep && <div className="absolute top-[14px] right-0 h-[40px] w-[2px] bg-[#5f6368]" />}
        </div>
      ))}
      <div className="flex h-[68px] flex-1 items-center pl-[30px]">
        <svg viewBox="0 0 26 26" className="h-[26px] w-[26px]" stroke="#bdc1c6" strokeWidth="3">
          <path d="M13 0v26M0 13h26" />
        </svg>
      </div>
    </div>
  );
}

function Toolbar() {
  return (
    <div className={`flex h-[64px] shrink-0 items-start bg-[#35363a] pt-[8px] ${UI}`}>
      <div className="flex h-[56px] w-[217px] shrink-0 items-center pl-[31px]">
        <svg viewBox="0 0 26 26" className="h-[26px] w-[26px]" fill="none" stroke="#e8eaed" strokeWidth="2.500">
          <path d="M25 13H3M13 3L3 13l10 10" />
        </svg>
        <svg viewBox="0 0 26 26" className="ml-[38px] h-[26px] w-[26px]" fill="none" stroke="#7d8085" strokeWidth="2.500">
          <path d="M1 13h22M13 3l10 10-10 10" />
        </svg>
        <svg viewBox="0 0 28 28" className="ml-[38px] h-[28px] w-[28px]" fill="none" stroke="#e8eaed" strokeWidth="2.500">
          <path d="M23 9a11 11 0 1 0 2 7" />
          <path d="M25 2v9h-9" fill="#e8eaed" stroke="none" />
        </svg>
      </div>
      <div className="flex h-[56px] w-[2421px] shrink-0 items-center rounded-full bg-[#202124] pl-[22px] text-[26.400px]">
        <svg viewBox="0 0 26 26" className="h-[26px] w-[26px]" fill="none" stroke="#e8eaed" strokeWidth="2.200">
          <circle cx="13" cy="13" r="11.500" />
          <path d="M13 11.500v8M13 6.500v2.500" strokeWidth="2.600" />
        </svg>
        <span className="ml-[20px] text-[#e8eaed]">Non sécurisé</span>
        <span className="ml-[12px] h-[40px] w-[2px] bg-[#6b6e73]" />
        <span className="ml-[18px] text-[26.600px] text-white">
          webtp.fil.univ-lille1.fr<span className="text-[#9aa0a6]">/~ouaichouche/P20/</span>
        </span>
        <svg viewBox="0 0 28 28" className="mr-[22px] ml-auto h-[28px] w-[28px]" fill="none" stroke="#bdc1c6" strokeWidth="2.400">
          <path d="M14 2.500l3.500 7.700 8.400 1-6.200 5.700 1.700 8.300L14 20.100l-7.400 4.100 1.700-8.300L2.100 11.200l8.400-1z" />
        </svg>
      </div>
      <div className="flex h-[56px] flex-1 items-center pl-[30px]">
        <svg viewBox="0 0 28 30" className="h-[30px] w-[28px]">
          <rect x="6" y="1" width="21" height="21" fill="#9b9ea3" />
          <rect x="3" y="4" width="21" height="21" fill="#bdbfc3" />
          <rect x="0" y="7" width="22" height="22" rx="1" fill="#e8e8e8" />
          <path d="M4 24a7 7 0 0 1 14 0z" fill="#d9473b" />
          <path d="M8 24h6v4H8z" fill="#3f7fe0" />
        </svg>
        <span className="ml-[25px] h-[40px] w-[2px] bg-[#5f6368]" />
        <div className="ml-[25px] flex h-[44px] w-[44px] items-center justify-center rounded-full bg-[#e0507e] text-[22px] text-white">z</div>
        <svg viewBox="0 0 8 28" className="ml-[38px] h-[28px] w-[8px]" fill="#bdc1c6">
          <circle cx="4" cy="4" r="3" />
          <circle cx="4" cy="14" r="3" />
          <circle cx="4" cy="24" r="3" />
        </svg>
      </div>
    </div>
  );
}

function Bookmarks() {
  return (
    <div className={`flex h-[74px] shrink-0 items-center border-b-2 border-[#2b2c2f] bg-[#35363a] pl-[29px] text-[22.500px] text-[#e8eaed] ${UI}`}>
      {bookmarks.map((b) => (
        <div key={b.label} className={`flex shrink-0 items-center ${b.mr}`}>
          {b.icon}
          <span className={`block whitespace-nowrap ${b.ml} ${b.width}`}>{b.label}</span>
        </div>
      ))}
      <span className="text-[26px] text-[#dadce0]">»</span>
    </div>
  );
}

function Stations() {
  return (
    <div className="min-h-0 flex-1 overflow-hidden rounded-b-[12px] bg-linear-to-b from-white from-[95%] to-[#ececec] font-['Liberation_Sans',Arial,sans-serif] text-[28px] leading-[52px] text-black">
      <div className="ml-[224px] grid grid-cols-[repeat(5,384px)] items-end gap-x-[60px] gap-y-[60px] pt-[32px]">
        {stations.map((s) => (
          <div key={s} className={`border-b-4 border-l-4 border-black ${s === "CONDITION" ? "h-[108px]" : ""}`}>
            <ul className="pl-[80px]">
              <li className="relative before:absolute before:top-[24px] before:left-[-30px] before:h-[8px] before:w-[8px] before:rounded-full before:bg-black before:content-['']">
                {s}
              </li>
            </ul>
          </div>
        ))}
        <div className="h-[56px] border-b-4 border-l-4 border-black" />
        <div className="h-[56px] border-b-4 border-l-4 border-black" />
        <div className="h-[56px] border-b-4 border-l-4 border-black" />
        <div className="h-[56px] border-b-4 border-l-4 border-black" />
      </div>
    </div>
  );
}

function Dock() {
  return (
    <div className="flex h-[77px] shrink-0 bg-[#0c1222]">
      <div className="ml-[40px] flex h-[77px] w-[2798px] items-start rounded-t-[10px] border-t-[3px] border-[#2c3340] bg-[#161c29] pt-[8px] pl-[6px]">
        {dock.map((d, i) =>
          d === "sep" ? (
            <div key={i} className="flex h-[56px] w-[26.500px] shrink-0 justify-center">
              <div className="h-[56px] w-[2px] bg-[#4a4f59]" />
            </div>
          ) : (
            <div key={i} className="relative flex h-[50px] w-[58.200px] shrink-0 items-center justify-center">
              {d.node}
              {d.dot && <span className="absolute top-[56px] left-[26px] h-[6px] w-[6px] rounded-full bg-[#9b9fa6]" />}
            </div>
          ),
        )}
      </div>
    </div>
  );
}

export default function App() {
  return (
    <div className="flex h-[1800px] w-[2880px] flex-col overflow-hidden bg-[#0c1222]">
      <MenuBar />
      <div className="flex min-h-0 flex-1 flex-col rounded-[12px] border-t-2 border-b-2 border-t-[#6a6b6d] border-b-black bg-[#202124]">
        <TabStrip />
        <Toolbar />
        <Bookmarks />
        <Stations />
      </div>
      <Dock />
    </div>
  );
}
